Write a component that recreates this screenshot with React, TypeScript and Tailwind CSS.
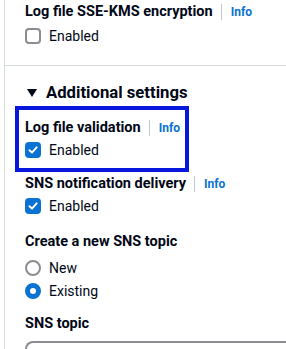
import type { ReactNode } from 'react'

const font = { fontFamily: 'Roboto, "Open Sans", Arial, sans-serif' }

function Checkbox({ checked }: { checked: boolean }) {
  if (checked) {
    return (
      <span className="w-4 h-4 rounded-[4px] bg-[#0972d3] flex items-center justify-center shrink-0">
        <svg width="12" height="12" viewBox="0 0 12 12" fill="none">
          <path d="M2.5 6.2 L5 8.6 L9.6 3.4" stroke="white" strokeWidth="2" strokeLinecap="round" strokeLinejoin="round" />
        </svg>
      </span>
    )
  }
  return <span className="w-4 h-4 rounded-[4px] border-2 border-[#8c8c94] bg-white shrink-0" />
}

function Radio({ checked }: { checked: boolean }) {
  if (checked) {
    return <span className="w-4 h-4 rounded-full border-[5px] border-[#0972d3] bg-white shrink-0" />
  }
  return <span className="w-4 h-4 rounded-full border-2 border-[#8c8c94] bg-white shrink-0" />
}

function Label({ children, info }: { children: ReactNode; info?: boolean }) {
  return (
    <div className="flex items-center h-5 text-[14.5px] leading-5 font-bold text-[#000716] whitespace-nowrap">
      <span className="shrink-0">{children}</span>
      {info && (
        <>
          <span className="ml-[8px] mr-[9px] w-px h-4 bg-[#c6c6cd] shrink-0" />
          <span className="text-[12px] text-[#0972d3] shrink-0">Info</span>
        </>
      )}
    </div>
  )
}

function Option({ control, label }: { control: ReactNode; label: string }) {
  return (
    <div className="flex items-center gap-2 h-5 text-[14px] leading-5 text-[#000716]">
      {control}
      <span>{label}</span>
    </div>
  )
}

export default function App() {
  return (
    <div style={font} className="w-[286px] h-[349px] overflow-hidden bg-white pl-1">
      <div className="h-full border-l border-[#d5dbdb]">
        <div className="pl-5 pt-[2px] pb-[19px] border-b border-[#d5dbdb]">
          <Label info>Log file SSE-KMS encryption</Label>
          <div className="mt-[4px]">
            <Option control={<Checkbox checked={false} />} label="Enabled" />
          </div>
        </div>

        <div className="pt-[15px]">
          <div className="pl-[22px] flex items-center gap-[9px] h-[24px]">
            <svg width="10" height="8" viewBox="0 0 10 8">
              <polygon points="0,0 10,0 5,8" fill="#000716" />
            </svg>
            <span className="text-[16.7px] leading-6 font-bold text-[#000716]">Additional settings</span>
          </div>

          <div className="ml-[10px] mt-[1px] w-[174px] border-4 border-[#0718dc] pl-[6px] pt-[8px] pb-[8px] overflow-hidden">
            <Label info>Log file validation</Label>
            <div className="mt-[2px]">
              <Option control={<Checkbox checked />} label="Enabled" />
            </div>
          </div>

          <div className="pl-5 pt-[2px]">
            <Label info>SNS notification delivery</Label>
            <div className="mt-[2px]">
              <Option control={<Checkbox checked />} label="Enabled" />
            </div>

            <div className="mt-[16px]">
              <Label>Create a new SNS topic</Label>
            </div>
            <div className="mt-[6px] flex flex-col gap-[3px]">
              <Option control={<Radio checked={false} />} label="New" />
              <Option control={<Radio checked />} label="Existing" />
            </div>

            <div className="mt-[13px]">
              <Label>SNS topic</Label>
            </div>
            <div className="mt-[7px] h-8 rounded-lg border-2 border-[#8c8c94] border-r-0 rounded-r-none" />
          </div>
        </div>
      </div>
    </div>
  )
}
